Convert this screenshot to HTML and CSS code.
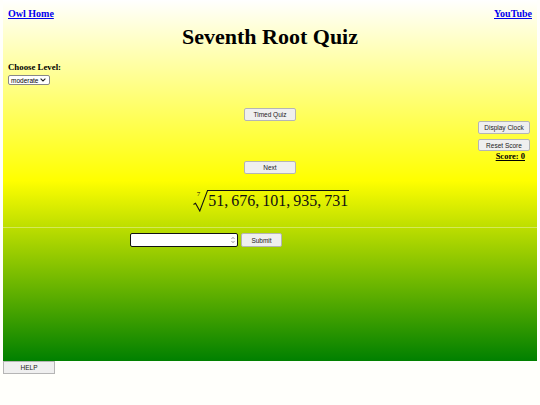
FILE: index.html
```html
<!DOCTYPE html>
<html>
<head>
<meta charset="utf-8">
<link rel="stylesheet" href="styles.css">
</head>
<body>
<div class="panel">
  <div class="toplinks">
    <a href="#">Owl Home</a>
    <a href="#">YouTube</a>
  </div>
  <h1 class="title">Seventh Root Quiz</h1>
  <div class="level">
    <div class="level-label">Choose Level:</div>
    <div class="select"><span>moderate</span><svg width="6" height="4" viewBox="0 0 6 4"><path d="M0.6 0.6 L3 3 L5.4 0.6" fill="none" stroke="#222" stroke-width="1.1"/></svg></div>
  </div>
  <div class="controls">
    <div class="center-col">
      <button class="btn">Timed Quiz</button>
      <button class="btn next">Next</button>
    </div>
    <div class="right-col">
      <button class="btn">Display Clock</button>
      <button class="btn">Reset Score</button>
      <a class="score" href="#">Score: 0</a>
    </div>
  </div>
  <div class="math">
    <span class="index">7</span>
    <svg class="rad" width="15" height="22" viewBox="0 0 15 22"><path d="M0.5 14.5 L2.5 13.3 L6.8 21 L14.5 0.6" fill="none" stroke="#111" stroke-width="1.1"/></svg>
    <span class="radicand">51, 676, 101, 935, 731</span>
  </div>
  <div class="rule"></div>
  <div class="answer">
    <div class="num-input"><span class="spin"><svg width="4" height="8" viewBox="0 0 4 8"><path d="M0.5 3 L2 1.3 L3.5 3 M0.5 5 L2 6.7 L3.5 5" fill="none" stroke="#777" stroke-width="0.7"/></svg></span></div>
    <button class="btn submit">Submit</button>
  </div>
</div>
<button class="btn help">HELP</button>
</body>
</html>
```
FILE: styles.css
```css
html, body {
  margin: 0;
  padding: 0;
}
body {
  background: #fffffb;
  width: 540px;
  height: 405px;
  overflow: hidden;
}
.panel {
  margin: 0 3px;
  height: 361px;
  background: linear-gradient(#ffffff 0%, #ffff00 50%, #008000 100%);
  box-sizing: border-box;
  padding: 8px 5px 0 5px;
}
.toplinks {
  display: flex;
  justify-content: space-between;
  font-family: "Liberation Serif", serif;
  font-weight: bold;
  font-size: 10px;
  line-height: 12px;
}
.toplinks a {
  color: #0000ee;
  text-decoration: underline;
}
.title {
  margin: 5px 0 0 0;
  text-align: center;
  font-family: "Liberation Serif", serif;
  font-weight: bold;
  font-size: 22px;
  line-height: 24px;
  color: #000;
}
.level {
  margin-top: 13px;
}
.level-label {
  font-family: "Liberation Serif", serif;
  font-weight: bold;
  font-size: 8.8px;
  line-height: 10px;
}
.select {
  margin-top: 3px;
  width: 42px;
  height: 10px;
  box-sizing: border-box;
  background: #fff;
  border: 1px solid #888;
  border-radius: 2px;
  display: flex;
  align-items: center;
  justify-content: space-between;
  padding: 0 3px 0 2px;
  font-family: "Liberation Sans", sans-serif;
  font-size: 6.5px;
  color: #000;
}
.controls {
  display: grid;
  grid-template-columns: 1fr auto 1fr;
  margin-top: 23px;
}
.center-col {
  grid-column: 2;
  display: flex;
  flex-direction: column;
  align-items: center;
  gap: 40px;
}
.right-col {
  grid-column: 3;
  display: flex;
  flex-direction: column;
  align-items: flex-end;
  padding-top: 13px;
  padding-right: 2px;
  gap: 5px;
}
.btn {
  width: 52px;
  height: 13px;
  padding: 0;
  margin: 0;
  box-sizing: border-box;
  background: #efefef;
  border: 1px solid #b5b5b5;
  border-radius: 2px;
  font-family: "Liberation Sans", sans-serif;
  font-size: 6.5px;
  color: #222;
}
.right-col .btn + .btn {
  height: 12px;
}
.score {
  margin-top: -5px;
  margin-right: 5px;
  font-family: "Liberation Serif", serif;
  font-weight: bold;
  font-size: 8.5px;
  line-height: 10px;
  color: #000;
  text-decoration: underline;
}
.math {
  margin-top: 16px;
  display: flex;
  justify-content: center;
  align-items: flex-start;
  font-family: "Liberation Serif", "DejaVu Serif", serif;
  color: #111;
  padding-left: 6px;
}
.index {
  font-size: 7px;
  line-height: 7px;
  margin-top: 1px;
  margin-right: -8px;
  position: relative;
  z-index: 1;
}
.rad {
  display: block;
  margin-left: 1px;
}
.radicand {
  border-top: 1.1px solid #111;
  font-size: 16px;
  word-spacing: -1px;
  line-height: 20px;
  padding: 0 1px 0 1px;
  margin-left: -1px;
}
.rule {
  margin: 15px -5px 0 -5px;
  height: 1px;
  background: rgba(255, 255, 255, 0.35);
}
.answer {
  margin-top: 5px;
  padding-left: 122px;
  display: flex;
  gap: 3px;
}
.num-input {
  width: 108px;
  height: 14px;
  box-sizing: border-box;
  background: #fff;
  border: 1.5px solid #111;
  border-radius: 2px;
  display: flex;
  justify-content: flex-end;
  align-items: center;
  padding-right: 2px;
}
.spin svg {
  display: block;
}
.submit {
  width: 41px;
  height: 14px;
}
.help {
  display: block;
  margin-left: 3px;
  width: 52px;
  height: 13px;
  border-radius: 0;
}
```
